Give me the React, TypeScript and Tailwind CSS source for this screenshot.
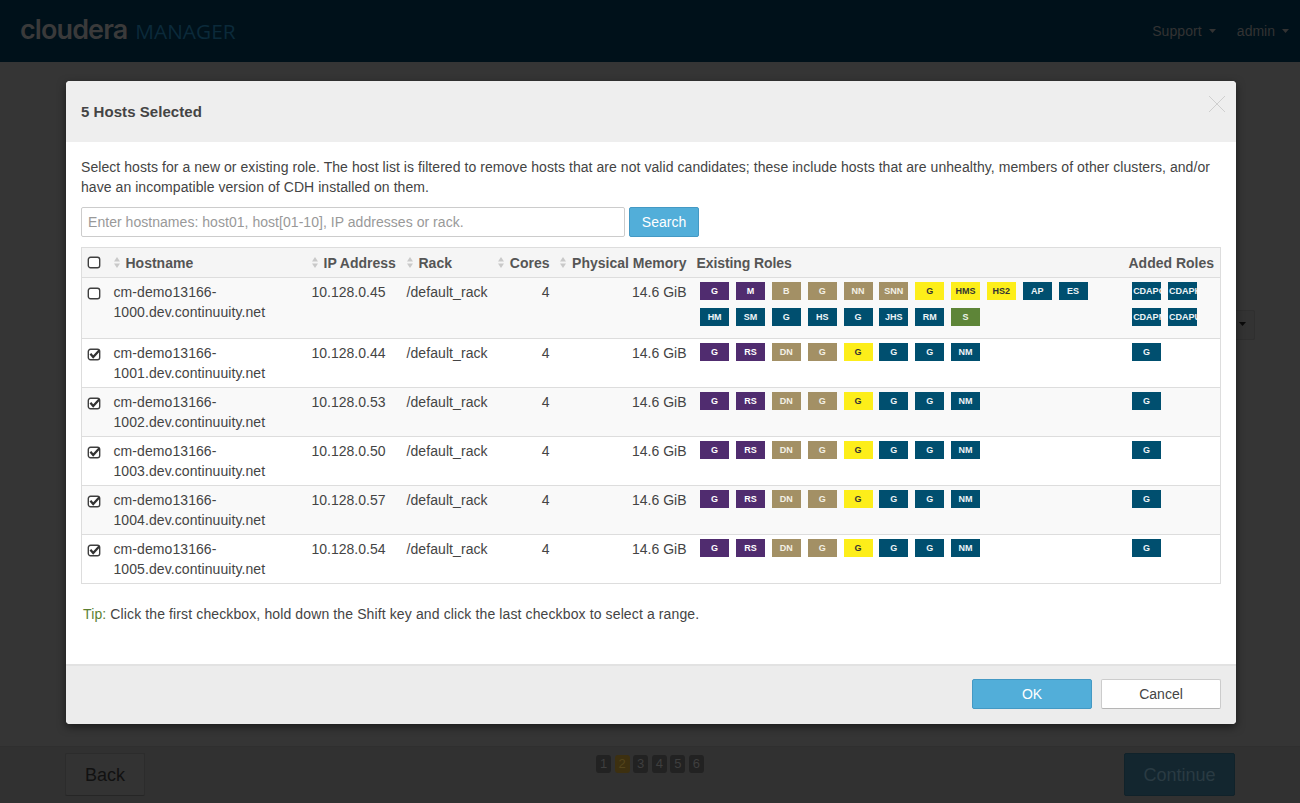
import React from "react";

type C = "p" | "t" | "y" | "n" | "g";
const cls: Record<C, string> = {
  p: "bg-[#502c6f] text-white",
  t: "bg-[#a39065] text-[#f3f0e6]",
  y: "bg-[#fdee1a] text-[#333333]",
  n: "bg-[#004f6f] text-[#eef4f7]",
  g: "bg-[#5e8538] text-[#eef4e8]",
};

function Pill({ l, c }: { l: string; c: C }) {
  return (
    <span className={`flex h-[18px] w-[29px] mr-[6.85px] mb-2 items-center overflow-hidden whitespace-nowrap text-[9px] leading-[18px] font-bold ${l.length > 4 ? "justify-start pl-[1px]" : "justify-center"} ${cls[c]}`}>
      {l}
    </span>
  );
}

function Box({ checked }: { checked?: boolean }) {
  return (
    <svg width="15" height="14" viewBox="0 0 15 14" className="block overflow-visible">
      <rect x="1.3" y="1.3" width="11.4" height="10.4" rx="2.2" fill="#fff" stroke="#3f3f3f" strokeWidth="1.4" />
      {checked && <path d="M3.4 5.8 L6.2 9 L12.4 2.2" fill="none" stroke="#333333" strokeWidth="2.3" />}
    </svg>
  );
}

function Sort() {
  return (
    <svg width="6" height="11" viewBox="0 0 6 11" className="shrink-0">
      <path d="M3 0 L6 4.4 H0 Z M3 11 L6 6.6 H0 Z" fill="#c9c9c9" />
    </svg>
  );
}

function Caret({ color }: { color: string }) {
  return (
    <svg width="7" height="4" viewBox="0 0 7 4" className="block shrink-0">
      <path d="M0 0 H7 L3.5 4 Z" fill={color} />
    </svg>
  );
}

function H({ t, right }: { t: string; right?: boolean }) {
  return (
    <div className={`flex items-center gap-[6px] ${right ? "justify-end" : ""}`}>
      <Sort />
      <span className="whitespace-nowrap">{t}</span>
    </div>
  );
}

const baseRoles: [string, C][] = [
  ["G", "p"], ["RS", "p"], ["DN", "t"], ["G", "t"], ["G", "y"], ["G", "n"], ["G", "n"], ["NM", "n"],
];
const firstRoles: [string, C][] = [
  ["G", "p"], ["M", "p"], ["B", "t"], ["G", "t"], ["NN", "t"], ["SNN", "t"], ["G", "y"], ["HMS", "y"], ["HS2", "y"], ["AP", "n"], ["ES", "n"],
  ["HM", "n"], ["SM", "n"], ["G", "n"], ["HS", "n"], ["G", "n"], ["JHS", "n"], ["RM", "n"], ["S", "g"],
];
const firstAdded: [string, C][] = [["CDAPC", "n"], ["CDAPK", "n"], ["CDAPM", "n"], ["CDAPU", "n"]];

const rows = [
  { n: "1000", ip: "10.128.0.45", roles: firstRoles, added: firstAdded, checked: false },
  { n: "1001", ip: "10.128.0.44", roles: baseRoles, added: [["G", "n"]] as [string, C][], checked: true },
  { n: "1002", ip: "10.128.0.53", roles: baseRoles, added: [["G", "n"]] as [string, C][], checked: true },
  { n: "1003", ip: "10.128.0.50", roles: baseRoles, added: [["G", "n"]] as [string, C][], checked: true },
  { n: "1004", ip: "10.128.0.57", roles: baseRoles, added: [["G", "n"]] as [string, C][], checked: true },
  { n: "1005", ip: "10.128.0.54", roles: baseRoles, added: [["G", "n"]] as [string, C][], checked: true },
];

export default function App() {
  return (
    <div className="relative flex h-[803px] w-[1300px] flex-col overflow-hidden bg-[#353535] font-['Liberation_Sans',Arial,sans-serif] text-[14px] leading-5 text-[#444444]">
      <header className="flex h-[62px] shrink-0 items-center justify-between bg-[#00111a] pl-[20px] pr-[11px]">
        <div className="mb-[3px] flex items-baseline">
          <span className="font-['Inter',sans-serif] text-[27px] font-semibold leading-none tracking-[-0.9px] text-[#3a3a3a]">cloudera</span>
          <span className="ml-[8px] font-['Open_Sans',sans-serif] text-[20.8px] leading-none text-[#0b2a3a]">MANAGER</span>
        </div>
        <nav className="flex items-center gap-[21px] text-[14px] text-[#333333]">
          <span className="flex items-center gap-[7px]"><span className="tracking-[0.1px]">Support</span><Caret color="#333333" /></span>
          <span className="flex items-center gap-[7px]">admin<Caret color="#333333" /></span>
        </nav>
      </header>

      <main className="flex flex-1 justify-end pr-[45px] pt-[248px]">
        <div className="flex h-[30px] w-[100px] items-center justify-end rounded-[2px] border border-[#2f2f2f] bg-[#333333] pb-[2px] pr-[8px]">
          <Caret color="#0a0a0a" />
        </div>
      </main>

      <footer className="flex h-[57px] shrink-0 items-start border-t border-[#2f2f2f] bg-[#313131] pl-[65px] pr-[65px] pt-[6px]">
        <button className="flex h-[43px] w-[80px] items-center justify-center rounded-[2px] border border-[#2c2c2c] border-b-[#262626] bg-[#333333] text-[18px] text-[#111111]">Back</button>
        <div className="ml-[451px] mt-[2px] flex gap-[3.6px]">
          {["1", "2", "3", "4", "5", "6"].map((s) => (
            <span key={s} className={`flex h-[18px] w-[15px] items-center justify-center rounded-[3px] text-[13px] ${s === "2" ? "bg-[#3d3010] text-[#54451c]" : "bg-[#222222] text-[#3f3f3f]"}`}>{s}</span>
          ))}
        </div>
        <button className="ml-auto flex h-[43px] w-[111px] items-center justify-center rounded-[2px] border border-[#10222a] bg-[#13262f] text-[18px] text-[#2a3b43]">Continue</button>
      </footer>

      <div className="absolute left-[66px] top-[81px] flex h-[643px] w-[1170px] flex-col overflow-hidden rounded-[4px] bg-white shadow-[0_3px_9px_rgba(0,0,0,0.5)]">
        <div className="relative flex h-[61px] shrink-0 items-center bg-[#eeeeee] pl-[15px]">
          <h3 className="text-[15px] font-bold tracking-[0.05px] text-[#444444]">5 Hosts Selected</h3>
          <svg width="18" height="18" viewBox="0 0 18 18" className="absolute right-[10px] top-[14px]">
            <path d="M1 1 L17 17 M17 1 L1 17" stroke="#cfcfcf" strokeWidth="1" />
          </svg>
        </div>

        <div className="flex flex-1 flex-col px-[15px] pt-[15px]">
          <p className="tracking-[0.06px] text-[#444444]">
            Select hosts for a new or existing role. The host list is filtered to remove hosts that are not valid candidates; these include hosts that are unhealthy, members of other clusters, and/or have an incompatible version of CDH installed on them.
          </p>
          <div className="mt-[10px] flex gap-[4px]">
            <input
              readOnly
              placeholder="Enter hostnames: host01, host[01-10], IP addresses or rack."
              className="h-[30px] w-[544px] rounded-[2px] border border-[#cccccc] px-[6px] text-[14px] tracking-[0.04px] outline-none placeholder:text-[#999999]"
            />
            <button className="h-[30px] w-[70px] rounded-[2px] border border-[#4499c4] bg-[#52aed9] text-[14px] text-white">Search</button>
          </div>

          <table className="mt-[10px] w-[1140px] table-fixed border-collapse border border-[#dddddd]">
            <colgroup>
              <col className="w-[24px]" />
              <col className="w-[198px]" />
              <col className="w-[95px]" />
              <col className="w-[90px]" />
              <col className="w-[69px]" />
              <col className="w-[137px]" />
              <col className="w-[426px]" />
              <col />
            </colgroup>
            <thead>
              <tr className="h-[30px] bg-[#f5f5f5] text-left font-bold text-[#555555]">
                <th className="pl-[5px] align-middle"><Box /></th>
                <th className="pl-[8px] font-bold"><H t="Hostname" /></th>
                <th className="pl-[8px] font-bold"><H t="IP Address" /></th>
                <th className="pl-[8px] font-bold"><H t="Rack" /></th>
                <th className="pr-[8px] font-bold"><H t="Cores" right /></th>
                <th className="pr-[8px] font-bold"><H t="Physical Memory" right /></th>
                <th className="pl-[2px] font-bold tracking-[-0.1px]">Existing Roles</th>
                <th className="pl-[8px] font-bold whitespace-nowrap">Added Roles</th>
              </tr>
            </thead>
            <tbody>
              {rows.map((r, i) => (
                <tr key={r.n} className={`border-t border-[#dddddd] align-top ${i % 2 === 0 ? "bg-[#f9f9f9]" : "bg-white"}`}>
                  <td className="pl-[5px] pt-[9px]"><Box checked={r.checked} /></td>
                  <td className="px-[8px] py-[4px] tracking-[0.08px]">cm-demo13166-<br />{r.n}.dev.continuuity.net</td>
                  <td className="px-[8px] py-[4px]">{r.ip}</td>
                  <td className="px-[8px] py-[4px] tracking-[0.08px]">/default_rack</td>
                  <td className="px-[8px] py-[4px] text-right">4</td>
                  <td className="px-[8px] py-[4px] text-right">14.6 GiB</td>
                  <td className="pl-[5.625px] py-[4px]">
                    <div className="flex flex-wrap">{r.roles.map(([l, c], k) => <Pill key={k} l={l} c={c} />)}</div>
                  </td>
                  <td className="pl-[11.625px] py-[4px]">
                    <div className="flex flex-wrap">{r.added.map(([l, c], k) => <Pill key={k} l={l} c={c} />)}</div>
                  </td>
                </tr>
              ))}
            </tbody>
          </table>

          <p className="mt-[20px] pl-[2px] tracking-[0.12px]"><span className="text-[#5c7f32]">Tip:</span> Click the first checkbox, hold down the Shift key and click the last checkbox to select a range.</p>
        </div>

        <div className="flex h-[60px] shrink-0 items-center justify-end gap-[9px] border-t-2 border-[#e2e2e2] bg-[#ececec] pb-[2px] pr-[15px]">
          <button className="h-[30px] w-[120px] rounded-[2px] border border-[#4499c4] bg-[#52aed9] text-[14px] text-white">OK</button>
          <button className="h-[30px] w-[120px] rounded-[2px] border border-[#cccccc] border-b-[#b5b5b5] bg-white text-[14px] text-[#444444]">Cancel</button>
        </div>
      </div>
    </div>
  );
}
